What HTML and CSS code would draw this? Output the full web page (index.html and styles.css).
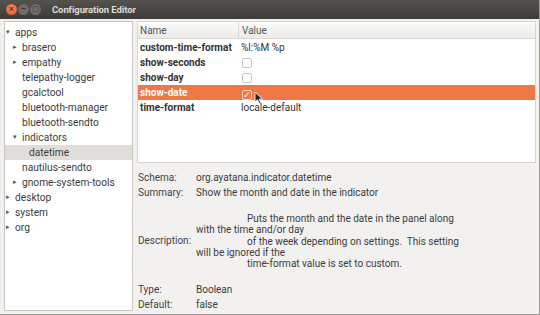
FILE: index.html
```html
<!DOCTYPE html>
<html lang="en">
<head>
    <meta charset="UTF-8">
    <title>Configuration Editor</title>
    <link rel="stylesheet" href="styles.css">
</head>
<body>
<div class="window">
    <div class="titlebar">
        <span class="wbtn close">&#215;</span>
        <span class="wbtn">&#8211;</span>
        <span class="wbtn">&#9633;</span>
        <span class="title">Configuration Editor</span>
    </div>
    <div class="main">
        <div class="tree">
            <div class="node l0"><span class="arrow">&#9662;</span>apps</div>
            <div class="node l1"><span class="arrow">&#9656;</span>brasero</div>
            <div class="node l1"><span class="arrow">&#9656;</span>empathy</div>
            <div class="node l1"><span class="arrow"></span>telepathy-logger</div>
            <div class="node l1"><span class="arrow"></span>gcalctool</div>
            <div class="node l1"><span class="arrow"></span>bluetooth-manager</div>
            <div class="node l1"><span class="arrow"></span>bluetooth-sendto</div>
            <div class="node l1"><span class="arrow">&#9662;</span>indicators</div>
            <div class="node l2 selected"><span class="arrow"></span>datetime</div>
            <div class="node l1"><span class="arrow"></span>nautilus-sendto</div>
            <div class="node l1"><span class="arrow">&#9656;</span>gnome-system-tools</div>
            <div class="node l0"><span class="arrow">&#9656;</span>desktop</div>
            <div class="node l0"><span class="arrow">&#9656;</span>system</div>
            <div class="node l0"><span class="arrow">&#9656;</span>org</div>
        </div>
        <div class="right">
            <div class="keys">
                <div class="row head">
                    <div class="name">Name</div>
                    <div class="value">Value</div>
                </div>
                <div class="row">
                    <div class="name">custom-time-format</div>
                    <div class="value">%l:%M %p</div>
                </div>
                <div class="row">
                    <div class="name">show-seconds</div>
                    <div class="value"><span class="check"></span></div>
                </div>
                <div class="row">
                    <div class="name">show-day</div>
                    <div class="value"><span class="check"></span></div>
                </div>
                <div class="row active">
                    <div class="name">show-date</div>
                    <div class="value"><span class="check on">&#10003;</span>
                        <svg class="cursor" width="10" height="14" viewBox="0 0 10 14"><path d="M1 1 L1 11 L3.5 8.8 L5.5 13 L7 12.3 L5.2 8.2 L8.5 8 Z" fill="#222" stroke="#fff" stroke-width="0.9"/></svg>
                    </div>
                </div>
                <div class="row">
                    <div class="name">time-format</div>
                    <div class="value">locale-default</div>
                </div>
            </div>
            <div class="details">
                <div class="label">Schema:</div>
                <div>org.ayatana.indicator.datetime</div>
                <div class="label">Summary:</div>
                <div>Show the month and date in the indicator</div>
                <div class="label desc-label">Description:</div>
                <div class="desc">
                    <div class="ind">Puts the month and the date in the panel along</div>
                    <div>with the time and/or day</div>
                    <div class="ind">of the week depending on settings.&nbsp; This setting</div>
                    <div>will be ignored if the</div>
                    <div class="ind">time-format value is set to custom.</div>
                </div>
                <div class="label">Type:</div>
                <div>Boolean</div>
                <div class="label">Default:</div>
                <div>false</div>
            </div>
        </div>
    </div>
</div>
</body>
</html>
```

FILE: styles.css
```css
body {
    margin: 0;
    font-family: Roboto, "Open Sans", sans-serif;
    font-size: 10px;
    color: #3c3c3c;
    background: #f2f1f0;
}

.window {
    width: 540px;
    height: 315px;
    display: flex;
    flex-direction: column;
    background: #f2f1f0;
    border-right: 1px solid #9a9893;
    border-bottom: 1px solid #9a9893;
    box-sizing: border-box;
}

.titlebar {
    height: 19px;
    flex-shrink: 0;
    background: linear-gradient(#55534e, #3c3b37);
    display: flex;
    align-items: center;
    padding-left: 6px;
    gap: 1px;
}

.wbtn {
    width: 11px;
    height: 11px;
    border-radius: 50%;
    background: #6e6c66;
    color: #3c3b37;
    font-size: 9px;
    line-height: 11px;
    text-align: center;
    font-weight: bold;
}

.wbtn.close {
    background: radial-gradient(circle at 50% 40%, #f58e62, #e25418);
    color: #7a2a0a;
}

.title {
    color: #dfdbd2;
    font-weight: bold;
    font-size: 9.5px;
    letter-spacing: -0.1px;
    margin-left: 10px;
}

.main {
    flex: 1;
    display: flex;
    padding: 2px 3px 3px 4px;
    gap: 4px;
    min-height: 0;
}

.tree {
    width: 129px;
    background: #fff;
    border: 1px solid #c9c6c1;
    box-sizing: border-box;
    padding-top: 3px;
    font-size: 10.2px;
}

.node {
    height: 15px;
    line-height: 15px;
    white-space: nowrap;
    display: flex;
}

.arrow {
    width: 9px;
    font-size: 7px;
    color: #555;
    text-align: left;
}

.l0 { padding-left: 1px; }
.l1 { padding-left: 8px; }
.l2 { padding-left: 15px; }

.node.selected {
    background: #e1ded9;
}

.right {
    flex: 1;
    display: flex;
    flex-direction: column;
    min-height: 0;
}

.keys {
    height: 142px;
    flex-shrink: 0;
    background: #fff;
    border: 1px solid #d8d5d0;
    box-sizing: border-box;
}

.row {
    display: grid;
    grid-template-columns: 100px 1fr;
    height: 15px;
    line-height: 15px;
    font-weight: bold;
    color: #333;
    white-space: nowrap;
}

.row .name {
    padding-left: 2px;
}

.row .value {
    font-weight: normal;
    padding-left: 3px;
    display: flex;
    align-items: center;
}

.row.head {
    height: 17px;
    line-height: 17px;
    font-weight: normal;
    color: #555;
    background: linear-gradient(#fbfbfa, #ecebe9);
    border-bottom: 1px solid #dcdad5;
    margin-bottom: 1px;
    box-sizing: border-box;
}

.row.head .value {
    border-left: 1px solid #dcdad5;
}

.row.active {
    background: #f07746;
    color: #fff;
}

.check {
    width: 8px;
    height: 8px;
    border: 1px solid #c8c6c2;
    border-radius: 2px;
    margin-left: 1px;
    font-size: 9px;
    line-height: 8px;
    text-align: center;
}

.check.on {
    border-color: #fbd3c0;
    color: #fff;
}

.cursor {
    margin-left: 2px;
    margin-top: 6px;
}

.details {
    display: grid;
    grid-template-columns: 58px 1fr;
    row-gap: 1px;
    padding: 8px 0 0 1px;
    line-height: 14px;
}

.label {
    color: #444;
}

.desc-label {
    align-self: center;
}

.desc {
    margin: 12px 0 12.5px;
    line-height: 11.3px;
}

.ind {
    padding-left: 51px;
}
```
